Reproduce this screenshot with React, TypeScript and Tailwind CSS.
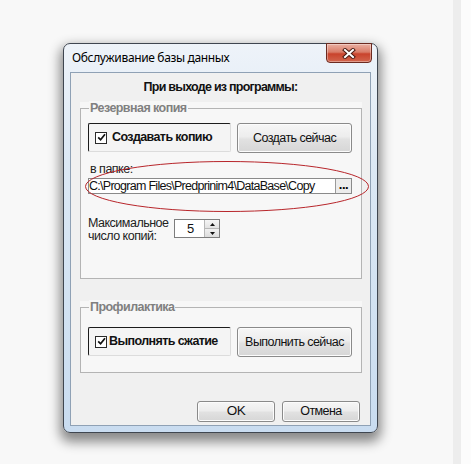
import React from "react";

const SANS = "font-['Liberation_Sans',Arial,sans-serif]";

function Win7Button({ children, className = "" }: { children: React.ReactNode; className?: string }) {
  return (
    <div
      className={`flex items-center justify-center rounded-[3px] border border-[#8a8a8a] bg-[linear-gradient(to_bottom,#f6f6f6_0%,#ededed_45%,#e1e1e1_55%,#d6d6d6_100%)] shadow-[inset_0_0_0_1px_#fcfcfc] text-[12.5px] tracking-[-0.55px] text-[#111] ${className}`}
    >
      {children}
    </div>
  );
}

function Check() {
  return (
    <span className="flex h-[12px] w-[12px] shrink-0 items-center justify-center border border-[#2a2a2a] bg-white">
      <svg width="9" height="9" viewBox="0 0 9 9">
        <path d="M1.2 4.3 L3.6 6.8 L8 1.2" stroke="#111" strokeWidth="1.7" fill="none" />
      </svg>
    </span>
  );
}

function CheckPanel({ label, gap }: { label: string; gap: string }) {
  return (
    <div
      className={`flex h-[29px] w-[143px] items-center rounded-[2px] border border-t-[#1c1c1c] border-l-[#1c1c1c] border-r-[#dcdcdc] border-b-[#dcdcdc] bg-[#f4f4f4] pl-[6px] ${gap}`}
    >
      <Check />
      <span className="whitespace-nowrap text-[12.5px] font-bold tracking-[-0.6px] text-[#111]">{label}</span>
    </div>
  );
}

function Group({
  legend,
  children,
  className = "",
  inner = "",
}: {
  legend: string;
  children: React.ReactNode;
  className?: string;
  inner?: string;
}) {
  return (
    <div className={`ml-[9px] w-[282px] bg-[#f7f7f7] pt-[6px] ${className}`}>
      <div className={`relative border border-[#b4b4b4] px-[7px] ${inner}`}>
        <span className="absolute left-[8px] top-[-8px] bg-[#f7f7f7] px-[1px] text-[12.5px] font-bold leading-[14px] tracking-[-0.55px] text-[#808080]">
          {legend}
        </span>
        {children}
      </div>
    </div>
  );
}

function Spinner() {
  return (
    <div className="mt-[2px] flex h-[19px] w-[46px] border border-[#7d7d7d] bg-white">
      <div className="flex flex-1 items-center justify-center pl-[2px] text-[13px] text-[#111]">5</div>
      <div className="flex w-[15px] flex-col border-l border-[#b8b8b8]">
        <div className="flex flex-1 items-center justify-center border-b border-[#b8b8b8] bg-[linear-gradient(to_bottom,#f5f5f5,#e2e2e2)]">
          <svg width="5" height="3" viewBox="0 0 5 3">
            <path d="M0 3 L2.5 0 L5 3 Z" fill="#111" />
          </svg>
        </div>
        <div className="flex flex-1 items-center justify-center bg-[linear-gradient(to_bottom,#f0f0f0,#dcdcdc)]">
          <svg width="5" height="3" viewBox="0 0 5 3">
            <path d="M0 0 L2.5 3 L5 0 Z" fill="#111" />
          </svg>
        </div>
      </div>
    </div>
  );
}

export default function App() {
  return (
    <div className={`relative flex h-[464px] w-[471px] overflow-hidden ${SANS}`}>
      <div className="h-full w-[453px] bg-[#f8f8f8] pl-[63px] pt-[43px]">
        {/* window */}
        <div className="relative flex h-[390px] w-[315px] flex-col rounded-[7px] border border-[#3f4650] bg-[linear-gradient(to_bottom,#eef3f9_0%,#dce8f4_30%,#c9dcf0_100%)] px-[6px] pb-[6px] shadow-[0_6px_12px_3px_rgba(0,0,0,0.45)]">
          <div className="flex h-[28px] items-center pl-[2px] font-['Noto_Sans',sans-serif] text-[12px] tracking-[-0.35px] text-black">
            Обслуживание базы данных
          </div>
          {/* close button */}
          <div className="absolute right-[5px] top-[-1px] flex h-[20px] w-[46px] items-center justify-center rounded-b-[4px] border border-[#6b2a20] bg-[linear-gradient(to_bottom,#eab0a2_0%,#d97c68_45%,#c9432c_55%,#d2664e_100%)] shadow-[inset_0_0_0_1px_rgba(255,255,255,0.35)]">
            <svg width="14" height="11" viewBox="0 0 14 11">
              <path d="M3 2 L11 9 M11 2 L3 9" stroke="#4a1a12" strokeWidth="4" strokeLinecap="square" />
              <path d="M3 2 L11 9 M11 2 L3 9" stroke="#ffffff" strokeWidth="2" strokeLinecap="square" />
            </svg>
          </div>
          {/* client area */}
          <div className="flex flex-1 flex-col border border-[#8fa1b5] bg-[#f0f0f0]">
            <div className="pt-[6px] text-center text-[12.5px] font-bold leading-[16px] tracking-[-0.75px] text-[#111]">
              При выходе из программы:
            </div>

            <Group legend="Резервная копия" className="mt-[7px]" inner="pt-[14px] pb-[35px]">
              <div className="flex gap-[6px]">
                <CheckPanel label="Создавать копию" gap="gap-[5px]" />
                <Win7Button className="h-[30px] w-[115px]">Создать сейчас</Win7Button>
              </div>
              <div className="ml-[2px] mt-[9px] text-[12.5px] leading-[14px] tracking-[-0.5px] text-[#222]">в папке:</div>
              <div className="mt-[2px] flex h-[16px] w-[264px] border border-[#8a8a8a] bg-white">
                <div className="flex-1 overflow-hidden whitespace-nowrap text-[12.5px] leading-[14px] tracking-[-0.72px] text-[#111]">
                  C:\Program Files\Predprinim4\DataBase\Copy
                </div>
                <div className="flex w-[16px] items-center justify-center border-l border-[#9a9a9a] bg-[#ececec] pb-[4px] text-[13px] font-bold leading-[11px] tracking-[-0.5px] text-black">
                  ...
                </div>
              </div>
              <div className="mt-[23px] flex">
                <div className="w-[86px] text-[12.5px] leading-[13px] tracking-[-0.5px] text-[#222]">
                  Максимальное
                  <br />
                  число копий:
                </div>
                <Spinner />
              </div>
            </Group>

            <Group legend="Профилактика" className="mt-[22px]" inner="pt-[19px] pb-[15px]">
              <div className="flex gap-[6px]">
                <CheckPanel label="Выполнять сжатие" gap="gap-[2px]" />
                <Win7Button className="h-[30px] w-[115px]">Выполнить сейчас</Win7Button>
              </div>
            </Group>

            <div className="mt-[28px] flex justify-end gap-[7px] pr-[10px]">
              <Win7Button className="h-[21px] w-[78px] text-[13.5px]">OK</Win7Button>
              <Win7Button className="h-[21px] w-[78px]">Отмена</Win7Button>
            </div>
          </div>
        </div>
      </div>
      <div className="h-full w-[8px] bg-[#ededed]" />
      <div className="h-full flex-1 bg-[#fcfcfc]" />

      {/* red annotation ellipse */}
      <svg className="pointer-events-none absolute left-[84px] top-[160px]" width="286" height="53" viewBox="0 0 286 53">
        <ellipse cx="143" cy="26.5" rx="141.5" ry="25" fill="none" stroke="#b8262b" strokeWidth="1" />
      </svg>
    </div>
  );
}
